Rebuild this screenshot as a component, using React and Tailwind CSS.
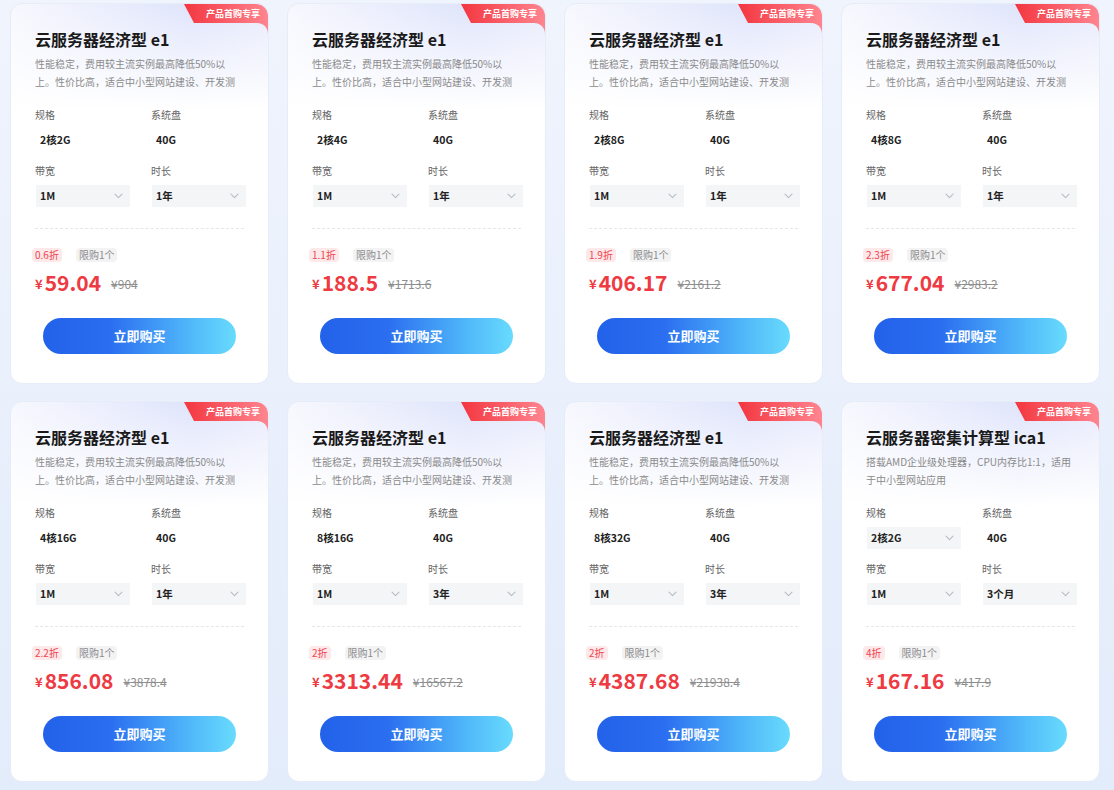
import React from "react";

const cards = [
  { title: "云服务器经济型 e1", spec: "2核2G", dur: "1年", off: "0.6折", price: "59.04", orig: "904" },
  { title: "云服务器经济型 e1", spec: "2核4G", dur: "1年", off: "1.1折", price: "188.5", orig: "1713.6" },
  { title: "云服务器经济型 e1", spec: "2核8G", dur: "1年", off: "1.9折", price: "406.17", orig: "2161.2" },
  { title: "云服务器经济型 e1", spec: "4核8G", dur: "1年", off: "2.3折", price: "677.04", orig: "2983.2" },
  { title: "云服务器经济型 e1", spec: "4核16G", dur: "1年", off: "2.2折", price: "856.08", orig: "3878.4" },
  { title: "云服务器经济型 e1", spec: "8核16G", dur: "3年", off: "2折", price: "3313.44", orig: "16567.2" },
  { title: "云服务器经济型 e1", spec: "8核32G", dur: "3年", off: "2折", price: "4387.68", orig: "21938.4" },
  {
    title: "云服务器密集计算型 ica1",
    spec: "2核2G",
    specSelect: true,
    dur: "3个月",
    off: "4折",
    price: "167.16",
    orig: "417.9",
    desc: ["搭载AMD企业级处理器，CPU内存比1:1，适用", "于中小型网站应用"],
  },
];

const defaultDesc = ["性能稳定，费用较主流实例最高降低50%以", "上。性价比高，适合中小型网站建设、开发测"];

function Chevron() {
  return (
    <svg width="9" height="6" viewBox="0 0 9 6" fill="none">
      <path d="M1 1.2 L4.5 4.6 L8 1.2" stroke="#b8bcc4" strokeWidth="1.1" strokeLinecap="round" strokeLinejoin="round" />
    </svg>
  );
}

function SelectBox({ value }) {
  return (
    <div className="ml-px flex h-[22px] w-[94px] items-center justify-between bg-[#f3f5f7] pl-[4px] pr-[7px]">
      <span className="text-[10.5px] font-bold text-[#222]">{value}</span>
      <Chevron />
    </div>
  );
}

function PlainBox({ value }) {
  return (
    <div className="ml-px flex h-[22px] w-[94px] items-center pl-[4px]">
      <span className="text-[10.5px] font-bold text-[#222]">{value}</span>
    </div>
  );
}

function Badge({ id }) {
  return (
    <div className="absolute right-0 top-0 h-[31px] w-[84px]">
      <svg width="84" height="31" viewBox="0 0 84 31" className="absolute inset-0">
        <defs>
          <linearGradient id={"bg" + id} x1="0" y1="0" x2="1" y2="0">
            <stop offset="0" stopColor="#f3363f" />
            <stop offset="1" stopColor="#ff8590" />
          </linearGradient>
        </defs>
        <path d="M0 0 H72 A12 12 0 0 1 84 12 V30 C84 24 80 19 73 19 H10 Z" fill={"url(#bg" + id + ")"} />
      </svg>
      <div className="relative flex h-[19px] items-center justify-center pl-[14px] pr-0 text-[9px] font-bold leading-none text-white">
        产品首购专享
      </div>
    </div>
  );
}

function Card({ c, i }) {
  const desc = c.desc || defaultDesc;
  return (
    <div className="relative h-[381px] w-[259px] overflow-hidden rounded-xl border border-[#e6ecf8] bg-[linear-gradient(to_bottom,rgba(255,255,255,0)_0px,#ffffff_105px),linear-gradient(to_right,#f7f8fe_0%,#dfe4fb_70%,#e8ebfc_100%)] px-6 pt-[23px]">
      <Badge id={i} />
      <div className="text-[16px] font-bold leading-[24px] text-[#1a1a1a]">{c.title}</div>
      <div className="mt-[4px] text-[10px] leading-[18px] text-[#8a8a8a]">
        {desc.map((l, k) => (
          <div key={k} className="whitespace-nowrap">{l}</div>
        ))}
      </div>
      <div className="mt-4 grid grid-cols-[116px_1fr]">
        <div className="text-[10px] leading-4 text-[#666]">规格</div>
        <div className="text-[10px] leading-4 text-[#666]">系统盘</div>
        <div className="mt-[6px]">{c.specSelect ? <SelectBox value={c.spec} /> : <PlainBox value={c.spec} />}</div>
        <div className="mt-[6px]"><PlainBox value="40G" /></div>
        <div className="mt-[12px] text-[10px] leading-4 text-[#666]">带宽</div>
        <div className="mt-[12px] text-[10px] leading-4 text-[#666]">时长</div>
        <div className="mt-[6px]"><SelectBox value="1M" /></div>
        <div className="mt-[6px]"><SelectBox value={c.dur} /></div>
      </div>
      <div className="mt-[21px] border-t border-dashed border-[#e6e6e6]" />
      <div className="mt-[19px] flex items-center gap-[14px] -ml-[3px]">
        <span className="rounded-sm bg-[#fde8ea] px-[3px] text-[10px] leading-[14px] text-[#f0444c]">{c.off}</span>
        <span className="rounded-sm bg-[#f3f3f4] px-[3px] text-[10px] leading-[14px] text-[#8a8a8a]">限购1个</span>
      </div>
      <div className="mt-[6px] flex h-[28px] items-center">
        <span className="mt-[3px] text-[13px] font-bold text-[#ee3a42]">¥</span>
        <span className="ml-[2px] text-[21px] font-bold leading-[28px] text-[#ee3a42]">{c.price}</span>
        <span className="ml-[10px] mt-[3px] text-[12px] text-[#8e8e8e] line-through">¥{c.orig}</span>
      </div>
      <div className="mt-[22px] flex justify-center">
        <button className="flex h-[36px] w-[193px] items-center justify-center rounded-full bg-[linear-gradient(to_right,#2262ea_0%,#2b6ef0_35%,#4fb6f9_75%,#68dbfd_100%)] text-[13px] font-bold text-white">
          立即购买
        </button>
      </div>
    </div>
  );
}

export default function App() {
  return (
    <div
      className="min-h-[790px] bg-[linear-gradient(to_bottom,#f0f4fd,#e3ecfb)] pl-[10px] pt-[3px]"
      style={{ fontFamily: '"Noto Sans CJK SC", "Noto Sans", sans-serif' }}
    >
      <div className="grid grid-cols-[repeat(4,259px)] gap-x-[18px] gap-y-[17px]">
        {cards.map((c, i) => (
          <Card key={i} c={c} i={i} />
        ))}
      </div>
    </div>
  );
}
